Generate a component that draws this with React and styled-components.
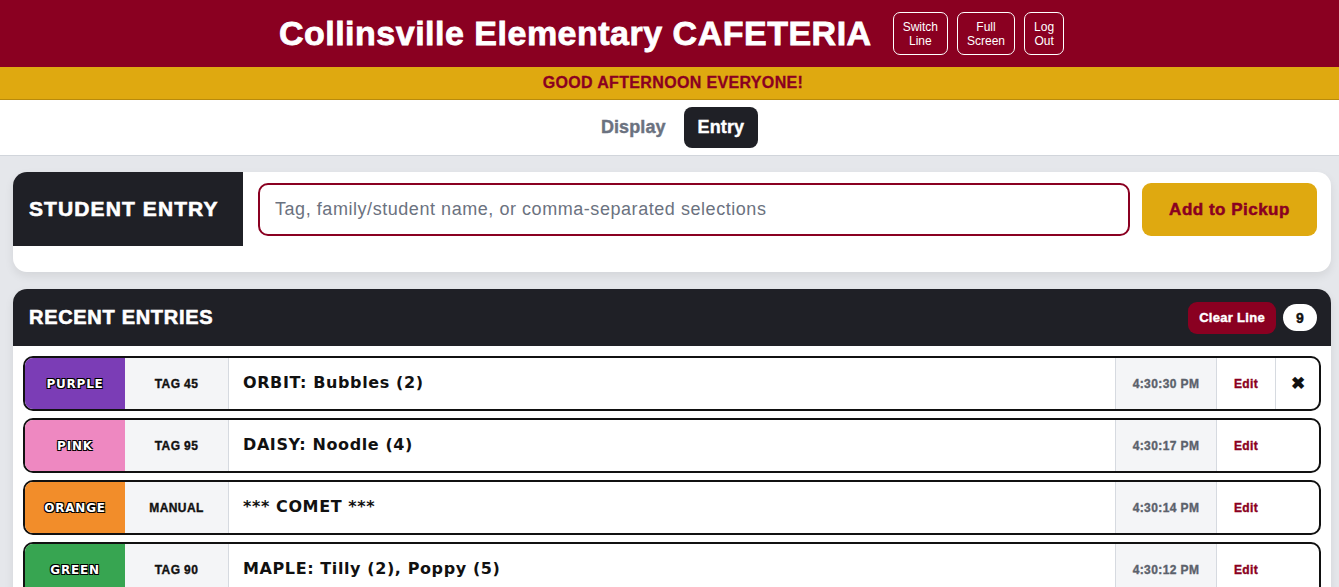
import React from 'react';
import styled, { createGlobalStyle } from 'styled-components';

const GlobalStyle = createGlobalStyle`
  * { box-sizing: border-box; }
  body {
    margin: 0;
    background: #e5e7eb;
    font-family: "Liberation Sans", Arial, sans-serif;
  }
`;

const Header = styled.header`
  background: #8a0021;
  height: 67px;
  display: flex;
  align-items: center;
  justify-content: center;
  gap: 21px;
  padding-left: 4px;
`;

const Title = styled.h1`
  margin: 0;
  color: #fff;
  font-size: 34px;
  font-weight: 700;
  letter-spacing: 0.5px;
  -webkit-text-stroke: 0.8px currentColor;
`;

const HeaderButtons = styled.div`
  display: flex;
  gap: 9px;
`;

const HeaderButton = styled.button`
  background: transparent;
  border: 1px solid #fff;
  border-radius: 7px;
  color: #fff;
  font-family: "Liberation Sans", Arial, sans-serif;
  font-size: 12px;
  line-height: 14px;
  height: 43px;
  padding: 0 9px;
`;

const Banner = styled.div`
  background: #dfa910;
  border-bottom: 1px solid #b88a0c;
  height: 33px;
  display: flex;
  align-items: center;
  justify-content: center;
  padding-left: 7px;
  color: #8a0021;
  font-weight: 700;
  font-size: 16px;
  letter-spacing: 0.35px;
  -webkit-text-stroke: 0.3px currentColor;
`;

const TabBar = styled.nav`
  background: #fff;
  height: 56px;
  border-bottom: 1px solid #d1d5db;
  display: flex;
  align-items: center;
  justify-content: center;
  gap: 18px;
  padding-left: 20px;
`;

const Tab = styled.button`
  border: none;
  background: ${p => (p.$active ? '#1f2026' : 'transparent')};
  color: ${p => (p.$active ? '#fff' : '#6b7280')};
  font-family: "Liberation Sans", Arial, sans-serif;
  font-weight: 700;
  font-size: 18px;
  letter-spacing: 0.1px;
  -webkit-text-stroke: 0.4px currentColor;
  height: 41px;
  padding: 0 ${p => (p.$active ? '14px' : '0')};
  border-radius: 8px;
`;

const Main = styled.main`
  padding: 16px 8px 0 13px;
  display: flex;
  flex-direction: column;
  gap: 17px;
`;

const Card = styled.section`
  background: #fff;
  border-radius: 14px;
  box-shadow: 0 4px 10px rgba(0, 0, 0, 0.08);
  overflow: hidden;
`;

const EntryCard = styled(Card)`
  display: flex;
  align-items: flex-start;
  padding-bottom: 26px;
`;

const EntryLabel = styled.div`
  background: #1f2026;
  color: #fff;
  width: 230px;
  height: 74px;
  display: flex;
  align-items: center;
  padding-left: 16px;
  font-size: 21px;
  font-weight: 700;
  letter-spacing: 1.1px;
  -webkit-text-stroke: 0.6px currentColor;
  flex-shrink: 0;
`;

const EntryForm = styled.div`
  flex: 1;
  display: flex;
  gap: 12px;
  padding: 11px 14px 0 15px;
`;

const Input = styled.input`
  flex: 1;
  height: 53px;
  border: 2px solid #8a0021;
  border-radius: 10px;
  padding: 0 15px;
  font-family: "Liberation Sans", Arial, sans-serif;
  font-size: 18px;
  letter-spacing: 0.55px;
  outline: none;
  &::placeholder { color: #6b7280; }
`;

const AddButton = styled.button`
  width: 175px;
  height: 53px;
  border: none;
  border-radius: 9px;
  background: #dfa910;
  color: #8a0021;
  font-family: "Liberation Sans", Arial, sans-serif;
  font-weight: 700;
  font-size: 17px;
  letter-spacing: 0.5px;
  -webkit-text-stroke: 0.5px currentColor;
`;

const ListHeader = styled.div`
  background: #1f2026;
  height: 57px;
  display: flex;
  align-items: center;
  padding: 0 14px 0 16px;
  gap: 7px;
`;

const ListTitle = styled.h2`
  margin: 0;
  flex: 1;
  color: #fff;
  font-size: 20px;
  font-weight: 700;
  letter-spacing: 0.7px;
  -webkit-text-stroke: 0.6px currentColor;
`;

const ClearButton = styled.button`
  border: none;
  background: #8a0021;
  color: #fff;
  border-radius: 9px;
  height: 32px;
  padding: 0 11px;
  font-family: "Liberation Sans", Arial, sans-serif;
  font-weight: 700;
  font-size: 13px;
  letter-spacing: 0.3px;
  -webkit-text-stroke: 0.4px currentColor;
`;

const Count = styled.span`
  background: #fff;
  color: #111;
  border-radius: 14px;
  min-width: 34px;
  height: 27px;
  display: flex;
  align-items: center;
  justify-content: center;
  font-weight: 700;
  font-size: 14px;
  -webkit-text-stroke: 0.4px currentColor;
`;

const Rows = styled.div`
  padding: 10px;
  display: flex;
  flex-direction: column;
  gap: 7px;
`;

const Row = styled.div`
  display: flex;
  height: 55px;
  border: 2px solid #111;
  border-radius: 10px;
  overflow: hidden;
`;

const ColorChip = styled.div`
  width: 100px;
  background: ${p => p.$bg};
  display: flex;
  align-items: center;
  justify-content: center;
  color: #fff;
  font-family: "DejaVu Sans", sans-serif;
  font-weight: 700;
  font-size: 12px;
  letter-spacing: 0.8px;
  text-shadow: 1px 1px 0 #000, -1px -1px 0 #000, 1px -1px 0 #000, -1px 1px 0 #000;
`;

const TagCell = styled.div`
  width: 104px;
  background: #f4f5f7;
  border-right: 1px solid #d6dae0;
  display: flex;
  align-items: center;
  justify-content: center;
  font-size: 12px;
  font-weight: 700;
  letter-spacing: 0.4px;
  -webkit-text-stroke: 0.35px currentColor;
  color: #111;
`;

const NameCell = styled.div`
  flex: 1;
  display: flex;
  align-items: center;
  padding: 0 14px 2px;
  font-family: "DejaVu Sans", sans-serif;
  font-weight: 700;
  font-size: 16px;
  color: #111;
  letter-spacing: 0.6px;
`;

const TimeCell = styled.div`
  width: 102px;
  background: #f4f5f7;
  border-left: 1px solid #d6dae0;
  border-right: 1px solid #d6dae0;
  display: flex;
  align-items: center;
  justify-content: center;
  font-size: 12px;
  font-weight: 700;
  letter-spacing: 0.4px;
  -webkit-text-stroke: 0.35px currentColor;
  color: #5b616b;
`;

const EditCell = styled.div`
  width: 58px;
  display: flex;
  align-items: center;
  justify-content: center;
  font-size: 12px;
  font-weight: 700;
  letter-spacing: 0.3px;
  -webkit-text-stroke: 0.35px currentColor;
  color: #8a0021;
`;

const RemoveCell = styled.div`
  width: 44px;
  border-left: 1px solid ${p => (p.$show ? '#d6dae0' : 'transparent')};
  display: flex;
  align-items: center;
  justify-content: center;
  font-size: 17px;
  font-weight: 700;
  color: #111;
`;

const entries = [
  { color: 'PURPLE', bg: '#7b3db6', tag: 'TAG 45', name: 'ORBIT: Bubbles (2)', time: '4:30:30 PM', remove: true },
  { color: 'PINK', bg: '#ee88c1', tag: 'TAG 95', name: 'DAISY: Noodle (4)', time: '4:30:17 PM' },
  { color: 'ORANGE', bg: '#f28d2a', tag: 'MANUAL', name: '*** COMET ***', time: '4:30:14 PM' },
  { color: 'GREEN', bg: '#37a551', tag: 'TAG 90', name: 'MAPLE: Tilly (2), Poppy (5)', time: '4:30:12 PM' },
  { color: 'BLUE', bg: '#3b7ddd', tag: 'TAG 12', name: 'RIVER: Pip (1)', time: '4:30:09 PM' },
];

export default function App() {
  return (
    <>
      <GlobalStyle />
      <Header>
        <Title>Collinsville Elementary CAFETERIA</Title>
        <HeaderButtons>
          <HeaderButton>Switch<br />Line</HeaderButton>
          <HeaderButton>Full<br />Screen</HeaderButton>
          <HeaderButton>Log<br />Out</HeaderButton>
        </HeaderButtons>
      </Header>
      <Banner>GOOD AFTERNOON EVERYONE!</Banner>
      <TabBar>
        <Tab>Display</Tab>
        <Tab $active>Entry</Tab>
      </TabBar>
      <Main>
        <EntryCard>
          <EntryLabel>STUDENT ENTRY</EntryLabel>
          <EntryForm>
            <Input placeholder="Tag, family/student name, or comma-separated selections" />
            <AddButton>Add to Pickup</AddButton>
          </EntryForm>
        </EntryCard>
        <Card>
          <ListHeader>
            <ListTitle>RECENT ENTRIES</ListTitle>
            <ClearButton>Clear Line</ClearButton>
            <Count>9</Count>
          </ListHeader>
          <Rows>
            {entries.map((e, i) => (
              <Row key={i}>
                <ColorChip $bg={e.bg}>{e.color}</ColorChip>
                <TagCell>{e.tag}</TagCell>
                <NameCell>{e.name}</NameCell>
                <TimeCell>{e.time}</TimeCell>
                <EditCell>Edit</EditCell>
                <RemoveCell $show={e.remove}>{e.remove ? '✖' : ''}</RemoveCell>
              </Row>
            ))}
          </Rows>
        </Card>
      </Main>
    </>
  );
}
